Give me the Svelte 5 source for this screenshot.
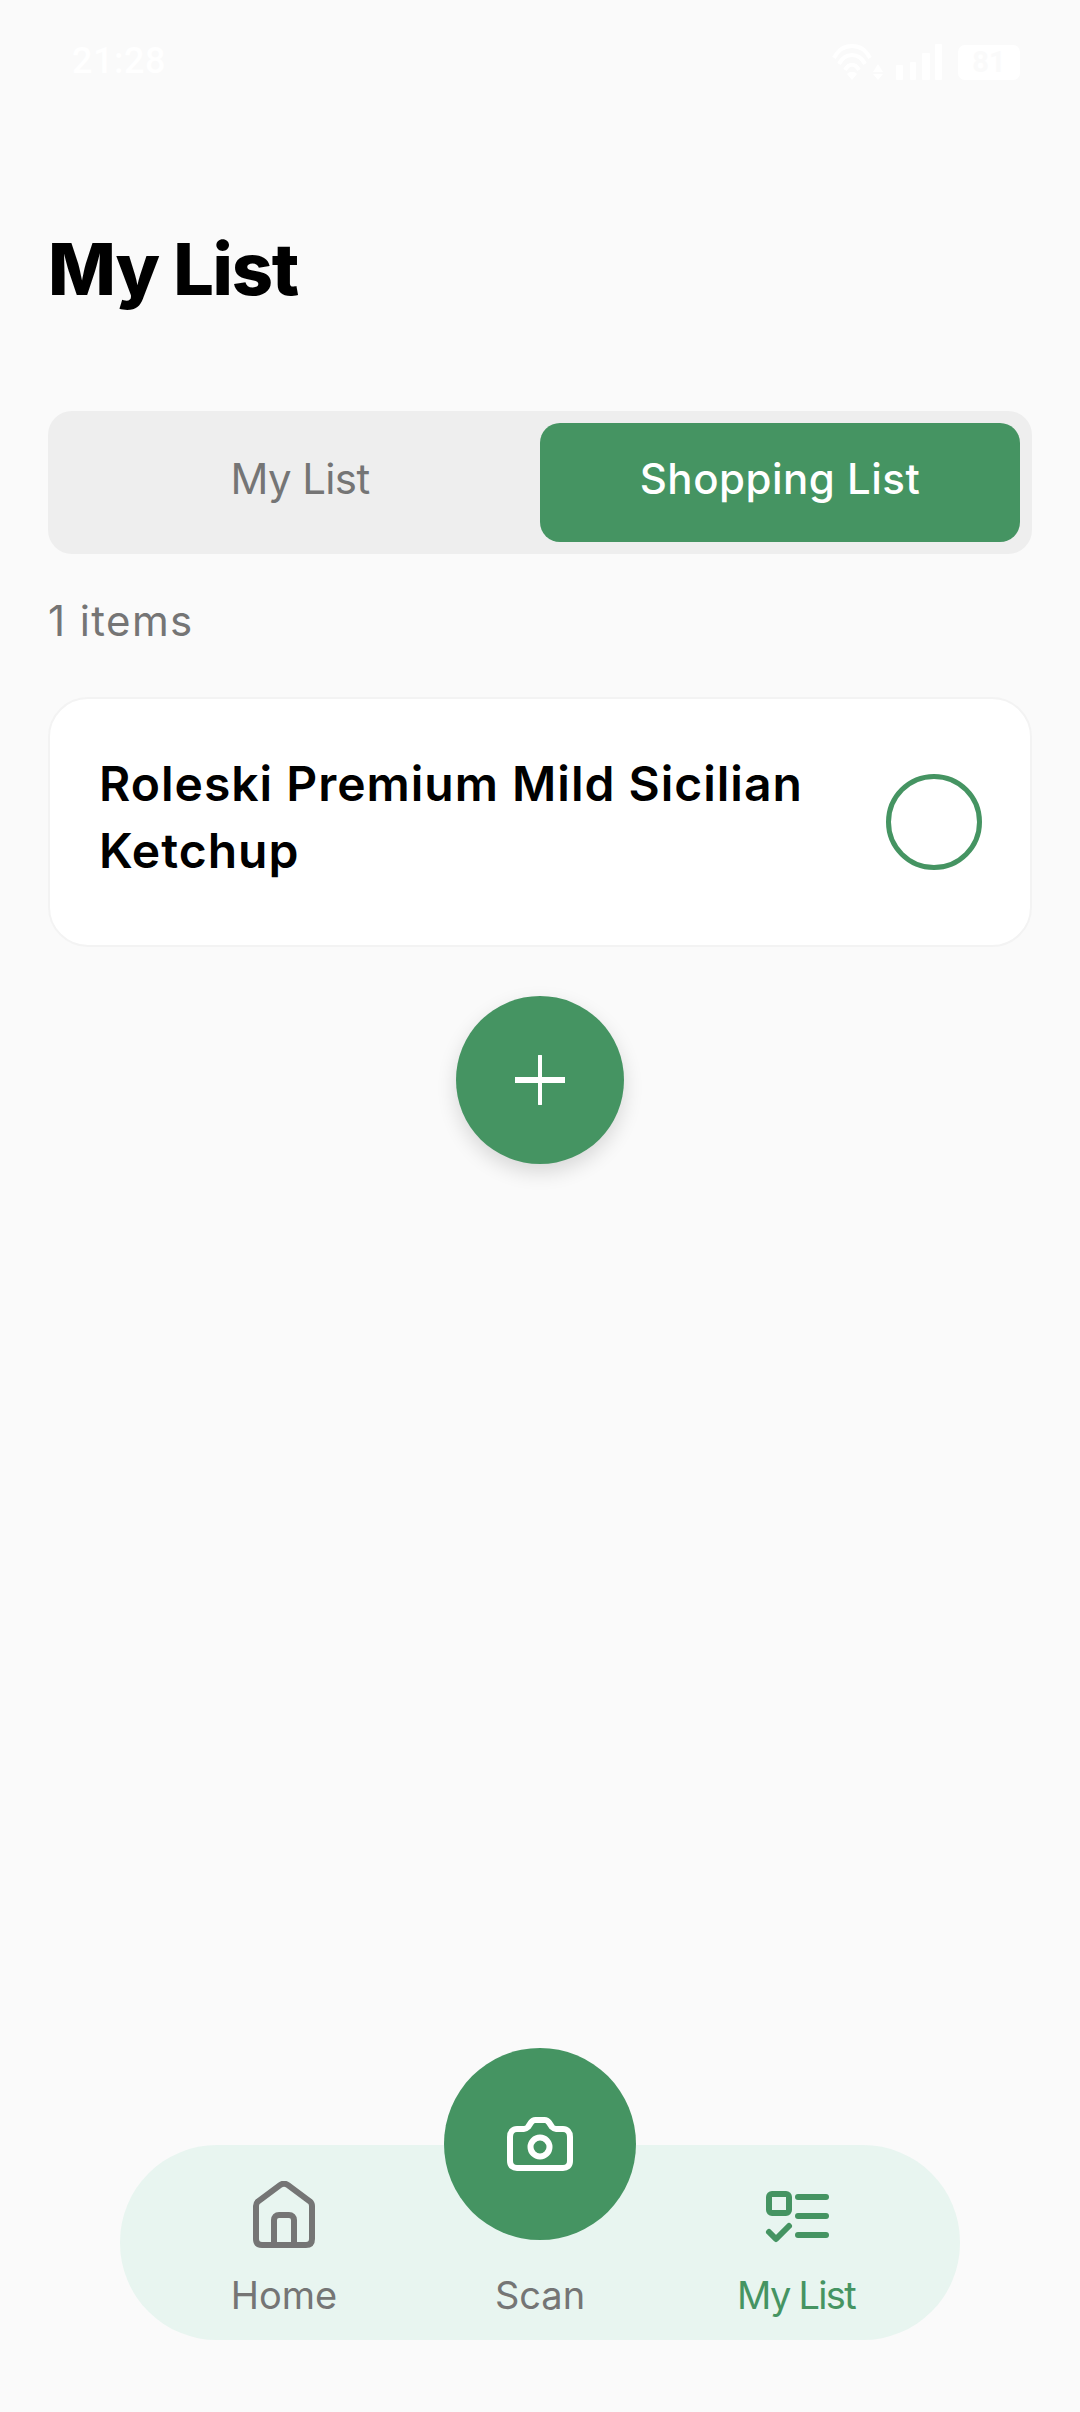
<script>
	const items = ['Roleski Premium Mild Sicilian Ketchup'];
</script>

<div class="page">
	<div class="status">
		<span class="time">21:28</span>
		<div class="status-icons">
			<svg class="wifi" width="51" height="37" viewBox="0 0 51 37" fill="none" stroke="#fff" stroke-width="4">
				<path d="M2 15C10 -1 30 -1 38 15" />
				<path d="M7 21C13 9 27 9 33 21" />
				<path d="M13 27C17 20 23 20 27 27" />
				<path d="M20 37l-5-6c3-3 7-3 10 0z" fill="#fff" stroke="none" />
				<path d="M46 21l5 8h-10z" fill="#fff" stroke="none" />
				<path d="M46 37l5-6h-10z" fill="#fff" stroke="none" />
			</svg>
			<svg class="signal" width="46" height="36" viewBox="0 0 46 36" fill="#fff">
				<rect x="0" y="21" width="7" height="15" rx="1" />
				<rect x="14" y="18" width="6" height="18" rx="1" />
				<rect x="26" y="9" width="8" height="27" rx="1" />
				<rect x="39" y="0" width="7" height="36" rx="1" />
			</svg>
			<div class="battery">81</div>
		</div>
	</div>

	<h1>My List</h1>

	<div class="tabs">
		<div class="tab">My List</div>
		<div class="tab active">Shopping List</div>
	</div>

	<p class="count">{items.length} items</p>

	{#each items as item}
		<div class="card">
			<div class="name">{item}</div>
			<div class="check"></div>
		</div>
	{/each}

	<button class="add" aria-label="Add">
		<svg width="50" height="50" viewBox="0 0 50 50" fill="none" stroke="#fff" stroke-linecap="round">
			<path d="M25 1v48" stroke-width="4" />
			<path d="M1 25h48" stroke-width="6" />
		</svg>
	</button>

	<nav>
		<div class="nav-item">
			<svg width="72" height="72" viewBox="0 0 72 72" fill="none" stroke="#757575" stroke-width="6" stroke-linejoin="round">
				<path d="M8 25C8 23 8.800 21.500 10.200 20.300L32 4.200C34.400 2.400 37.600 2.400 40 4.200L61.800 20.300C63.200 21.500 64 23 64 25V58C64 62 62 64 58 64H14C10 64 8 62 8 58Z" />
				<path d="M26 64V39C26 36 28 34 31 34H41C44 34 46 36 46 39V64" />
			</svg>
			<span>Home</span>
		</div>
		<div class="nav-item scan">
			<div class="scan-btn">
				<svg width="66" height="54" viewBox="0 0 66 54" fill="none" stroke="#fff" stroke-width="6" stroke-linejoin="round">
					<path d="M3 20C3 15 6 12 10 12H17C19 12 20 11 21 10L24 5.500C25 4 26.500 3 28.500 3H37.500C39.500 3 41 4 42 5.500L45 10C46 11 47 12 49 12H56C60 12 63 15 63 20V44C63 49 60 51 56 51H10C6 51 3 49 3 44Z" />
					<circle cx="33" cy="30" r="9.500" />
				</svg>
			</div>
			<span>Scan</span>
		</div>
		<div class="nav-item current">
			<svg class="list-icon" width="72" height="72" viewBox="0 0 72 72" fill="none" stroke="#459462" stroke-width="6" stroke-linecap="round" stroke-linejoin="round">
				<rect x="9" y="8" width="20" height="19" rx="3" />
				<path d="M38 11H66" />
				<path d="M38 30H66" />
				<path d="M38 49H66" />
				<path d="M9 46L16 53L29 40" />
			</svg>
			<span>My List</span>
		</div>
	</nav>
</div>

<style>
	:global(body) {
		margin: 0;
		background: #fafafa;
	}

	.page {
		position: relative;
		height: 2412px;
		box-sizing: border-box;
		padding: 0 48px;
		background: #fafafa;
		font-family: Inter, 'Open Sans', sans-serif;
		overflow: hidden;
	}

	.status {
		display: flex;
		justify-content: space-between;
		align-items: flex-start;
		height: 120px;
		box-sizing: border-box;
		padding: 40px 12px 0 24px;
		color: #fff;
	}

	.time {
		font-size: 36px;
		line-height: 42px;
		font-weight: 500;
		font-family: Roboto, sans-serif;
		letter-spacing: 0.5px;
	}

	.status-icons {
		display: flex;
		align-items: flex-end;
		gap: 13px;
		padding-top: 3px;
	}

	.signal {
		margin-right: 3px;
	}

	.battery {
		width: 62px;
		height: 35px;
		border-radius: 7px;
		background: #fff;
		color: #fafafa;
		font-family: Roboto, sans-serif;
		font-size: 29px;
		font-weight: 700;
		line-height: 35px;
		text-align: center;
	}

	h1 {
		margin: 105px 0 0;
		font-size: 72px;
		line-height: 87px;
		font-weight: 800;
		letter-spacing: -1.3px;
		color: #000;
	}

	.tabs {
		display: flex;
		margin-top: 99px;
		height: 143px;
		box-sizing: border-box;
		padding: 12px;
		background: #eeeeee;
		border-radius: 24px;
	}

	.tab {
		flex: 1;
		display: flex;
		align-items: center;
		justify-content: center;
		box-sizing: border-box;
		padding-bottom: 9px;
		border-radius: 20px;
		font-size: 42px;
		letter-spacing: -0.6px;
		color: #757575;
	}

	.tab.active {
		background: #459462;
		color: #fff;
		font-weight: 500;
		letter-spacing: 0.5px;
	}

	.count {
		margin: 42px 0 0;
		font-size: 42px;
		line-height: 50px;
		letter-spacing: 1.4px;
		color: #757575;
	}

	.card {
		display: flex;
		align-items: center;
		justify-content: space-between;
		margin-top: 51px;
		height: 250px;
		box-sizing: border-box;
		padding: 0 48px 0 49px;
		background: #fff;
		border: 2px solid #f3f3f3;
		border-radius: 40px;
	}

	.name {
		width: 730px;
		box-sizing: border-box;
		padding-bottom: 10px;
		font-size: 48px;
		line-height: 67px;
		font-weight: 600;
		letter-spacing: 1px;
		color: #000;
	}

	.check {
		width: 96px;
		height: 96px;
		box-sizing: border-box;
		border: 5px solid #459462;
		border-radius: 50%;
	}

	.add {
		display: flex;
		align-items: center;
		justify-content: center;
		width: 168px;
		height: 168px;
		margin: 49px auto 0;
		padding: 0;
		border: none;
		border-radius: 50%;
		background: #459462;
		box-shadow: 0 8px 20px rgba(0, 0, 0, 0.14);
	}

	nav {
		position: absolute;
		left: 120px;
		bottom: 72px;
		width: 840px;
		height: 195px;
		box-sizing: border-box;
		padding: 0 36px;
		display: grid;
		grid-template-columns: repeat(3, 1fr);
		background: #e8f5f0;
		border-radius: 97px;
	}

	.nav-item {
		position: relative;
		display: flex;
		flex-direction: column;
		align-items: center;
		padding-top: 36px;
		font-size: 38px;
		color: #757575;
	}

	.nav-item span {
		position: absolute;
		top: 125px;
		line-height: 50px;
	}

	.nav-item.current {
		color: #459462;
		letter-spacing: -1.7px;
	}

	.list-icon {
		margin-top: 5px;
	}

	.scan-btn {
		position: absolute;
		top: -97px;
		left: 50%;
		transform: translateX(-50%);
		display: flex;
		align-items: center;
		justify-content: center;
		width: 192px;
		height: 192px;
		border-radius: 50%;
		background: #459462;
	}
</style>
